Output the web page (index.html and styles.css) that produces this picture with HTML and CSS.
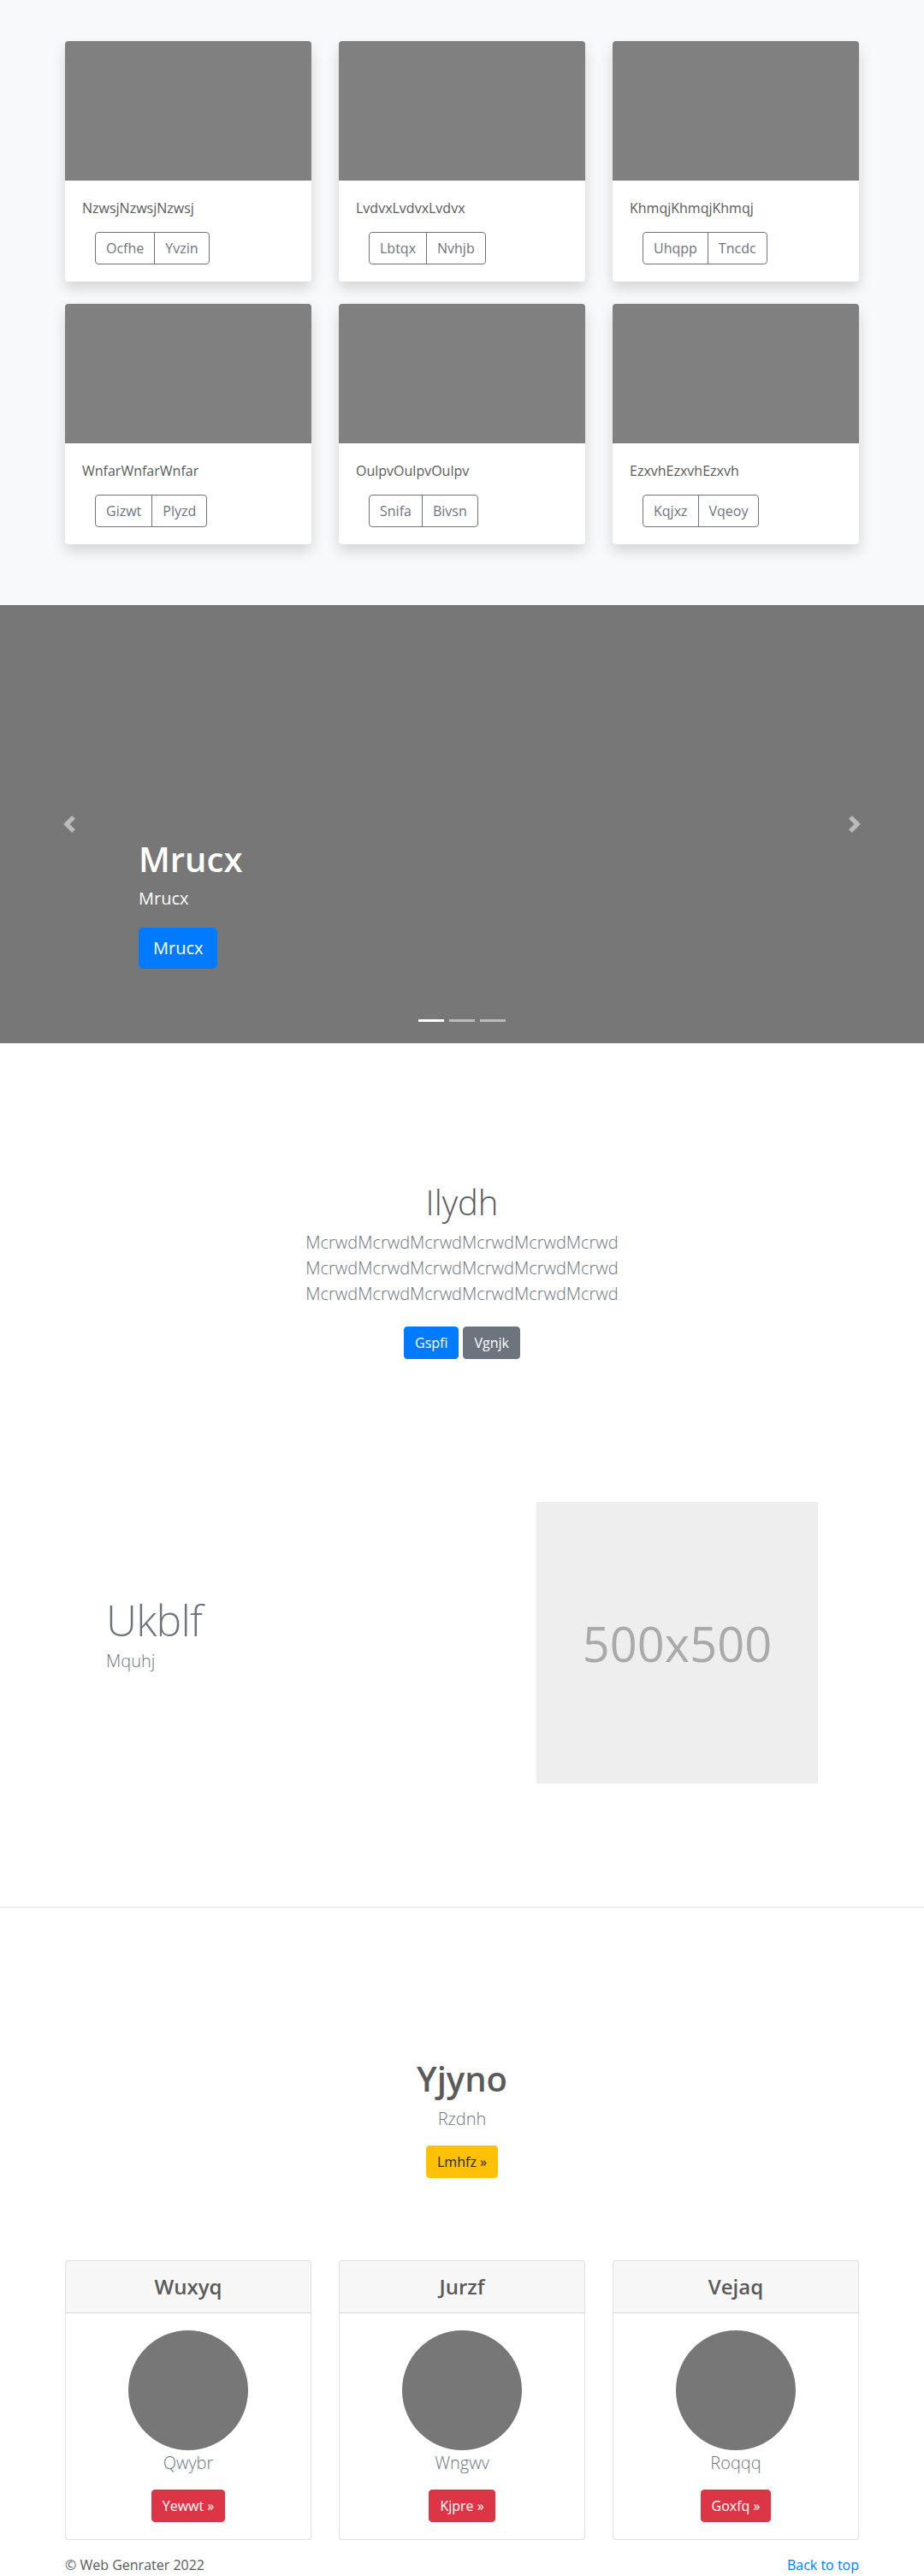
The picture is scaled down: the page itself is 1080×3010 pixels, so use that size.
FILE: index.html
```html
<!DOCTYPE html>
<html lang="en">
<head>
<meta charset="utf-8">
<title>Web Genrater</title>
<link rel="stylesheet" href="styles.css">
</head>
<body>
<section class="album">
  <div class="container grid3">
    <div class="card">
      <div class="card-img"></div>
      <div class="card-body">
        <p class="card-text">NzwsjNzwsjNzwsj</p>
        <div class="btn-group"><a class="btn btn-outline" href="#">Ocfhe</a><a class="btn btn-outline" href="#">Yvzin</a></div>
      </div>
    </div>
    <div class="card">
      <div class="card-img"></div>
      <div class="card-body">
        <p class="card-text">LvdvxLvdvxLvdvx</p>
        <div class="btn-group"><a class="btn btn-outline" href="#">Lbtqx</a><a class="btn btn-outline" href="#">Nvhjb</a></div>
      </div>
    </div>
    <div class="card">
      <div class="card-img"></div>
      <div class="card-body">
        <p class="card-text">KhmqjKhmqjKhmqj</p>
        <div class="btn-group"><a class="btn btn-outline" href="#">Uhqpp</a><a class="btn btn-outline" href="#">Tncdc</a></div>
      </div>
    </div>
    <div class="card">
      <div class="card-img"></div>
      <div class="card-body">
        <p class="card-text">WnfarWnfarWnfar</p>
        <div class="btn-group"><a class="btn btn-outline" href="#">Gizwt</a><a class="btn btn-outline" href="#">Plyzd</a></div>
      </div>
    </div>
    <div class="card">
      <div class="card-img"></div>
      <div class="card-body">
        <p class="card-text">OulpvOulpvOulpv</p>
        <div class="btn-group"><a class="btn btn-outline" href="#">Snifa</a><a class="btn btn-outline" href="#">Bivsn</a></div>
      </div>
    </div>
    <div class="card">
      <div class="card-img"></div>
      <div class="card-body">
        <p class="card-text">EzxvhEzxvhEzxvh</p>
        <div class="btn-group"><a class="btn btn-outline" href="#">Kqjxz</a><a class="btn btn-outline" href="#">Vqeoy</a></div>
      </div>
    </div>
  </div>
</section>

<section class="carousel">
  <ol class="indicators">
    <li class="active"></li>
    <li></li>
    <li></li>
  </ol>
  <div class="caption">
    <h1>Mrucx</h1>
    <p>Mrucx</p>
    <div class="btn-row"><a class="btn btn-lg btn-primary" href="#">Mrucx</a></div>
  </div>
  <a class="ctrl prev" href="#">
    <svg width="20" height="20" viewBox="0 0 8 8" fill="#fff"><path d="M5.25 0l-4 4 4 4 1.5-1.5L4.25 4l2.5-2.5L5.25 0z"/></svg>
  </a>
  <a class="ctrl next" href="#">
    <svg width="20" height="20" viewBox="0 0 8 8" fill="#fff"><path d="M2.75 0l-1.5 1.5L3.75 4l-2.5 2.5L2.75 8l4-4-4-4z"/></svg>
  </a>
</section>

<section class="intro">
  <h1>Ilydh</h1>
  <p class="lead muted">McrwdMcrwdMcrwdMcrwdMcrwdMcrwd<br>McrwdMcrwdMcrwdMcrwdMcrwdMcrwd<br>McrwdMcrwdMcrwdMcrwdMcrwdMcrwd</p>
  <div class="actions">
    <a class="btn btn-primary" href="#">Gspfi</a>
    <a class="btn btn-secondary" href="#">Vgnjk</a>
  </div>
</section>

<section class="container featurette">
  <div class="feat-text">
    <h2>Ukblf</h2>
    <p class="lead muted">Mquhj</p>
  </div>
  <div class="placeholder">500x500</div>
</section>

<hr class="divider">

<section class="pricing-head">
  <h1>Yjyno</h1>
  <p class="lead muted">Rzdnh</p>
  <div class="actions"><a class="btn btn-warning" href="#">Lmhfz &raquo;</a></div>
</section>

<section class="container grid3 pricing">
  <div class="pcard">
    <div class="pcard-header"><h4>Wuxyq</h4></div>
    <div class="pcard-body">
      <div class="circle"></div>
      <p class="lead muted">Qwybr</p>
      <div class="actions"><a class="btn btn-danger" href="#">Yewwt &raquo;</a></div>
    </div>
  </div>
  <div class="pcard">
    <div class="pcard-header"><h4>Jurzf</h4></div>
    <div class="pcard-body">
      <div class="circle"></div>
      <p class="lead muted">Wngwv</p>
      <div class="actions"><a class="btn btn-danger" href="#">Kjpre &raquo;</a></div>
    </div>
  </div>
  <div class="pcard">
    <div class="pcard-header"><h4>Vejaq</h4></div>
    <div class="pcard-body">
      <div class="circle"></div>
      <p class="lead muted">Roqqq</p>
      <div class="actions"><a class="btn btn-danger" href="#">Goxfq &raquo;</a></div>
    </div>
  </div>
</section>

<footer class="container footer">
  <span>&copy; Web Genrater 2022</span>
  <a class="top-link" href="#">Back to top</a>
</footer>
</body>
</html>
```

FILE: styles.css
```css
* { box-sizing: border-box; }
html, body { margin: 0; padding: 0; }
body {
  font-family: "Open Sans", "Noto Sans", "DejaVu Sans", sans-serif;
  font-size: 16px;
  line-height: 1.5;
  color: #5a5a5a;
  background: #fff;
}
a { text-decoration: none; }

.container { width: 928px; margin: 0 auto; }

/* album */
.album { background: #f8f9fa; padding: 48px 0 71px; }
.grid3 {
  display: grid;
  grid-template-columns: repeat(3, 288px);
  column-gap: 32px;
  row-gap: 26px;
}
.card {
  background: #fff;
  border-radius: 4px;
  overflow: hidden;
  box-shadow: 0 8px 16px rgba(0, 0, 0, 0.15);
}
.card-img { height: 163px; background: #808080; }
.card-body { padding: 20px; }
.card-text { margin: 0 0 16px; }
.btn-group { display: inline-flex; margin-left: 15px; }

.btn {
  display: inline-block;
  font-family: inherit;
  font-size: 16px;
  line-height: 24px;
  font-weight: 400;
  padding: 6px 12px;
  border: 1px solid transparent;
  border-radius: 4px;
  text-align: center;
  white-space: nowrap;
}
.btn-outline { color: #6c757d; border-color: #6c757d; background: transparent; }
.btn-group .btn:first-child { border-radius: 4px 0 0 4px; }
.btn-group .btn:last-child { border-radius: 0 4px 4px 0; margin-left: -1px; }
.btn-primary { background: #007bff; border-color: #007bff; color: #fff; }
.btn-secondary { background: #6c757d; border-color: #6c757d; color: #fff; }
.btn-warning { background: #ffc107; border-color: #ffc107; color: #212529; }
.btn-danger { background: #dc3545; border-color: #dc3545; color: #fff; }
.btn-lg { font-size: 20px; line-height: 30px; padding: 8px 16px; border-radius: 5px; }

/* carousel */
.carousel { position: relative; height: 512px; background: #777; overflow: hidden; }
.caption { position: absolute; left: 15%; right: 15%; bottom: 87px; color: #fff; }
.caption h1 { font-size: 40px; font-weight: 600; line-height: 1.2; margin: 0 0 7px; }
.caption p { font-size: 20px; line-height: 30px; margin: 0 0 19px; }
.btn-row { display: flex; }
.ctrl {
  position: absolute; top: 0; bottom: 0; width: 15%;
  display: flex; align-items: center; justify-content: center;
  opacity: 0.5;
}
.ctrl svg { display: block; }
.ctrl.prev { left: 0; }
.ctrl.next { right: 0; }
.indicators {
  position: absolute; left: 0; right: 0; bottom: 0;
  margin: 0 0 15px; padding: 0; list-style: none;
  display: flex; justify-content: center;
}
.indicators li {
  box-sizing: content-box;
  width: 30px; height: 3px; margin: 0 3px;
  background: #fff; background-clip: padding-box;
  border-top: 10px solid transparent; border-bottom: 10px solid transparent;
  opacity: 0.5;
}
.indicators li.active { opacity: 1; }

/* intro */
.intro { text-align: center; padding: 162px 0 167px; }
.intro h1 { font-size: 40px; font-weight: 300; line-height: 1.2; margin: 0 0 8px; }
.lead { font-size: 20px; font-weight: 300; line-height: 30px; }
.muted { color: #6c757d; }
.intro .lead { margin: 0 0 23px; }
.actions { display: flex; justify-content: center; gap: 5px; }

/* featurette */
.featurette { display: flex; align-items: center; }
.feat-text { flex: 1; padding-left: 48px; }
.feat-text h2 {
  font-size: 50px; font-weight: 300; line-height: 1;
  letter-spacing: -0.8px; margin: 0 0 8px; color: #6c757d;
}
.feat-text .lead { margin: 0 0 16px; }
.placeholder {
  width: 329px; height: 329px; margin-right: 48px;
  background: #eee; color: #aaa; font-size: 56px;
  display: flex; align-items: center; justify-content: center;
}

.divider { height: 0; border: 0; border-top: 1px solid #e3e3e3; margin: 144px 0 0; }

/* pricing */
.pricing-head { text-align: center; padding-top: 176px; }
.pricing-head h1 { font-size: 40px; font-weight: 600; line-height: 1.2; margin: 0 0 8px; }
.pricing-head .lead { margin: 0 0 16px; }
.pricing { margin-top: 96px; }
.pcard { border: 1px solid rgba(0, 0, 0, 0.125); border-radius: 4px; overflow: hidden; text-align: center; background: #fff; }
.pcard-header { background: rgba(0, 0, 0, 0.03); border-bottom: 1px solid rgba(0, 0, 0, 0.125); padding: 12px 20px; }
.pcard-header h4 { margin: 0; font-size: 24px; font-weight: 600; line-height: 36px; }
.pcard-body { padding: 20px; }
.circle { width: 140px; height: 140px; border-radius: 50%; background: #777; margin: 0 auto; }
.pcard-body .lead { margin: 0 0 16px; }

.footer { display: flex; justify-content: space-between; margin-top: 17px; }
.top-link { color: #007bff; }
```
